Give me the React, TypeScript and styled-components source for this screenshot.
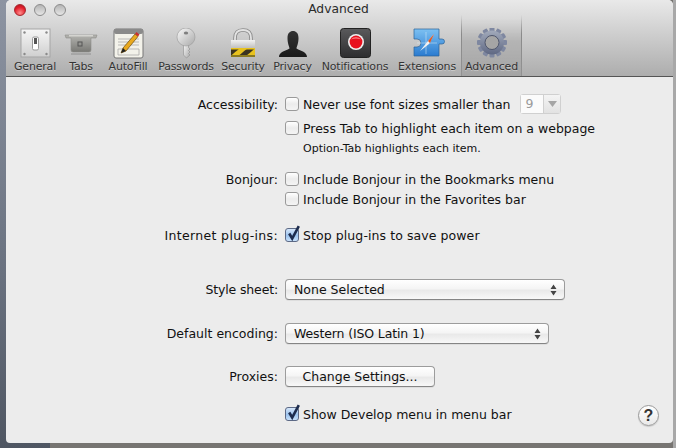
import React from "react";
import styled, { createGlobalStyle } from "styled-components";

const Global = createGlobalStyle`
  html, body { margin: 0; padding: 0; width: 676px; height: 448px; overflow: hidden; background: #74726f; }
  #root { width: 676px; height: 448px; }
`;

const Desktop = styled.div`
  width: 676px; height: 448px; box-sizing: border-box; padding: 0 3px 5px 6px;
  background:
    linear-gradient(90deg, transparent 673px, #a8a8a8 673px),
    linear-gradient(#8d94a2 0, #6a7280 60%, #4f5662 100%) left / 50px 100% no-repeat,
    #777572;
  font-family: "DejaVu Sans", sans-serif; color: #111;
`;
const Win = styled.div`
  width: 667px; height: 443px; display: flex; flex-direction: column; overflow: hidden;
  border-radius: 5px 5px 4px 4px; background: #ececec;
`;
const Toolbar = styled.div`
  height: 76px; flex: none; position: relative; display: flex; align-items: flex-end; padding-left: 6px;
  background: linear-gradient(#e9e9e9, #adadad); border-bottom: 1px solid #555;
`;
const Lights = styled.div`position: absolute; left: 8px; top: 4px; display: flex; gap: 8px;`;
const Light = styled.span<{ $c?: boolean }>`
  width: 12px; height: 12px; border-radius: 50%; box-sizing: border-box; border: 1px solid ${p => p.$c ? "#a5262c" : "#8b8b8b"};
  background: ${p => p.$c ? "radial-gradient(circle at 50% 80%, #ff8d8d, #e3202c 60%, #a81521)" : "linear-gradient(#b5b5b5, #e6e6e6)"};
`;
const Title = styled.div`
  position: absolute; left: 0; right: 0; top: 1px; text-align: center; font-size: 12.3px; line-height: 17px; color: #2b2b2b; padding-right: 2px;
`;
const Item = styled.div<{ $w: number; $ml?: number; $sel?: boolean }>`
  width: ${p => p.$w}px; margin-left: ${p => p.$ml ?? 0}px; height: 48px; flex: none; display: flex; flex-direction: column; align-items: center;
  ${p => p.$sel ? `
    height: 76px; justify-content: flex-end; box-sizing: border-box;
    background: linear-gradient(rgba(0,0,0,0) 25%, rgba(0,0,0,.1) 55%, rgba(0,0,0,.05) 100%);
    border-left: 1px solid; border-right: 1px solid;
    border-image: linear-gradient(rgba(120,120,120,0) 20%, #8a8a8a 45%, #929292) 1;
  ` : ""}
`;
const IconBox = styled.div`height: 32px; width: 36px; flex: none;`;
const ItemLabel = styled.div`
  font-size: 11px; line-height: 14px; height: 16px; color: #333; white-space: nowrap; letter-spacing: -0.18px; text-shadow: 0 1px 0 rgba(255,255,255,.35);
`;
const Content = styled.div`flex: 1; position: relative; padding-top: 17px;`;
const Row = styled.div<{ $mt?: number; $h?: number }>`
  display: grid; grid-template-columns: 272px 1fr; column-gap: 7px; align-items: center;
  height: ${p => p.$h ?? 20}px; margin-top: ${p => p.$mt ?? 0}px;
`;
const Label = styled.div<{ $ls?: number }>`
  text-align: right; font-size: 12.5px; white-space: nowrap; letter-spacing: ${p => p.$ls ?? 0}px;
`;
const Ctl = styled.div<{ $ls?: number }>`
  display: flex; align-items: center; font-size: 12.5px; white-space: nowrap; letter-spacing: ${p => p.$ls ?? 0}px;
`;
const Box = styled.span<{ $on?: boolean }>`
  width: 14px; height: 14px; box-sizing: border-box; border-radius: 3px; flex: none; margin-right: 4px; position: relative;
  border: 1px solid ${p => p.$on ? "#5d6a86" : "#9a9a9a"};
  background: ${p => p.$on ? "linear-gradient(#d5e6fa, #9cc3ee 55%, #c7e0fa)" : "linear-gradient(#fff, #ececec 50%, #f4f4f4)"};
`;
const CheckSvg = styled.svg`position: absolute; left: 0; top: -5px;`;
const Hint = styled.div`grid-column: 2; font-size: 11px; padding-left: 18px; white-space: nowrap;`;
const Mini = styled.div`
  margin-left: 10px; width: 41px; height: 20px; box-sizing: border-box; display: flex; border: 1px solid #d0d0d0; border-radius: 3px; background: #f7f7f7; color: #9a9a9a; font-size: 12.5px; align-items: center;
`;
const MiniVal = styled.div`width: 23px; padding-left: 4px; box-sizing: border-box; height: 100%; line-height: 18px; background: #fbfbfb; border-right: 1px solid #d0d0d0;`;
const MiniArrow = styled.div`flex: 1; display: flex; align-items: center; justify-content: center; height: 100%; background: linear-gradient(#f4f4f4, #e2e2e2);`;
const Select = styled.div<{ $w: number }>`
  width: ${p => p.$w}px; height: 21px; box-sizing: border-box; border: 1px solid #9c9c9c; border-bottom-color: #858585; border-radius: 4px;
  background: linear-gradient(#ffffff, #f5f5f5 45%, #e9e9e9 55%, #f8f8f8); display: flex; align-items: center; justify-content: space-between;
  padding: 0 7px 0 8px; font-size: 12.5px; box-shadow: 0 1px 0 rgba(0,0,0,.06);
`;
const SelectText = styled.span<{ $ls?: number }>`letter-spacing: ${p => p.$ls ?? 0}px;`;
const Button = styled.div`
  width: 150px; height: 21px; box-sizing: border-box; border: 1px solid #9c9c9c; border-bottom-color: #858585; border-radius: 4px; text-align: center;
  background: linear-gradient(#ffffff, #f5f5f5 45%, #e9e9e9 55%, #f8f8f8); font-size: 12.5px; line-height: 19px; box-shadow: 0 1px 0 rgba(0,0,0,.06);
`;
const Help = styled.div`
  position: absolute; left: 632px; top: 328px; width: 21px; height: 21px; box-sizing: border-box; border-radius: 50%; border: 1px solid #9a9a9a;
  background: linear-gradient(#fff, #e9e9e9); font-family: "Liberation Sans", sans-serif; font-weight: 700; font-size: 16px; line-height: 19px; text-align: center; color: #333; box-shadow: 0 1px 1px rgba(0,0,0,.15);
`;

const Check = () => (
  <CheckSvg width="16" height="18" viewBox="0 0 16 18">
    <path d="M3.2 9.5 L6.2 14.5 L12.8 2.2" fill="none" stroke="#1d2c4e" strokeWidth="2.6" />
  </CheckSvg>
);
const Updown = () => (
  <svg width="7" height="12" viewBox="0 0 7 12"><path d="M3.5 0.5 L6.5 5 H0.5Z M3.5 11.5 L0.5 7 H6.5Z" fill="#444" /></svg>
);

const General = () => (
  <svg width="36" height="32" viewBox="0 0 36 32">
    <defs><linearGradient id="g1" x1="0" y1="0" x2="0" y2="1"><stop offset="0" stopColor="#f6f6f6" /><stop offset="1" stopColor="#cfcfcf" /></linearGradient></defs>
    <rect x="4" y="1" width="29" height="28" fill="url(#g1)" stroke="#a5a5a5" />
    <g fill="#8a8a8a"><circle cx="7.5" cy="4.5" r="1.2" /><circle cx="29.5" cy="4.5" r="1.2" /><circle cx="7.5" cy="26" r="1.2" /><circle cx="29.5" cy="26" r="1.2" /></g>
    <rect x="15.5" y="9" width="6" height="13" rx="1.5" fill="#fff" stroke="#999" />
    <rect x="17" y="10" width="3" height="6" fill="#555" />
  </svg>
);
const Tabs = () => (
  <svg width="36" height="32" viewBox="0 0 36 32">
    <defs><linearGradient id="t1" x1="0" y1="0" x2="0" y2="1"><stop offset="0" stopColor="#b4b4b0" /><stop offset="1" stopColor="#787874" /></linearGradient></defs>
    <path d="M2 7 H34 L33 10 H28 V22 Q28 24 26 24 H10 Q8 24 8 22 V10 H3Z" fill="url(#t1)" stroke="#8e8e8a" strokeWidth=".6" />
    <rect x="6" y="7" width="24" height="1.5" fill="#d4d4d0" />
    <rect x="15" y="14" width="4" height="4" fill="none" stroke="#555" />
    <rect x="8" y="25" width="20" height="2" fill="#000" opacity=".12" />
  </svg>
);
const AutoFill = () => (
  <svg width="36" height="32" viewBox="0 0 36 32">
    <rect x="4" y="1" width="29" height="29" rx="2" fill="#f3f2ea" stroke="#777" />
    <rect x="4" y="1" width="29" height="5" rx="2" fill="#8a8a8a" />
    <g stroke="#aaa" strokeWidth=".8"><path d="M8 11H29M8 14H29M8 17H29" /><path d="M8 21H29V27H8Z" fill="none" /></g>
    <path d="M11 25 L13 20 L25 6 L28 8.5 L16 23Z" fill="#e9a91e" stroke="#6b4a10" strokeWidth=".7" />
    <path d="M25 6 L26.5 4 L29.5 6.5 L28 8.5Z" fill="#c8312e" />
    <path d="M11 25 L13 20 L16 23Z" fill="#222" />
  </svg>
);
const Key = () => (
  <svg width="36" height="32" viewBox="0 0 36 32">
    <defs><linearGradient id="k1" x1="0" y1="0" x2="1" y2="1"><stop offset="0" stopColor="#fafafa" /><stop offset="1" stopColor="#a9a9a9" /></linearGradient></defs>
    <path d="M15.5 15 V27 L18.5 30 L22 27 L20.5 25.5 L22 24 L20.5 22.5 L22 21 L20.5 19.5 V15Z" fill="url(#k1)" stroke="#8d8d8d" strokeWidth=".6" />
    <circle cx="18" cy="9" r="9" fill="url(#k1)" stroke="#9b9b9b" strokeWidth=".6" />
    <ellipse cx="18" cy="5" rx="2.2" ry="1.6" fill="#7f7f7f" />
  </svg>
);
const Lock = () => (
  <svg width="36" height="32" viewBox="0 0 36 32">
    <defs>
      <linearGradient id="l1" x1="0" y1="0" x2="0" y2="1"><stop offset="0" stopColor="#f2f2f2" /><stop offset="1" stopColor="#b9b9b9" /></linearGradient>
      <pattern id="l2" width="10" height="10" patternUnits="userSpaceOnUse" patternTransform="rotate(50)"><rect width="10" height="10" fill="#e8c21e" /><rect width="5" height="10" fill="#3a3420" /></pattern>
    </defs>
    <path d="M10 14 V10 Q10 2 18 2 Q26 2 26 10 V14" fill="none" stroke="#8b8b8b" strokeWidth="3.6" />
    <path d="M10 14 V10 Q10 2 18 2 Q26 2 26 10 V14" fill="none" stroke="#e3e3e3" strokeWidth="1.8" />
    <rect x="6" y="12" width="24" height="9" fill="url(#l1)" />
    <rect x="6" y="20" width="24" height="7" fill="#e8c21e" />
    <rect x="6" y="21.5" width="24" height="5.5" fill="url(#l2)" />
    <rect x="6" y="27" width="24" height="2" fill="#8a7a20" />
  </svg>
);
const Privacy = () => (
  <svg width="36" height="32" viewBox="0 0 36 32">
    <defs><linearGradient id="p1" x1="0" y1="0" x2="0" y2="1"><stop offset="0" stopColor="#333" /><stop offset="1" stopColor="#1a1a1a" /></linearGradient></defs>
    <path d="M4 29 C4 24 10 23 14.5 20.5 C14.5 19 12.5 16 12.5 10 C12.5 5 15 3 18 3 C21 3 23.5 5 23.5 10 C23.5 16 21.5 19 21.5 20.5 C26 23 32 24 32 29Z" fill="url(#p1)" />
  </svg>
);
const Notif = () => (
  <svg width="36" height="32" viewBox="0 0 36 32">
    <defs><linearGradient id="n1" x1="0" y1="0" x2="0" y2="1"><stop offset="0" stopColor="#5a5a5c" /><stop offset="1" stopColor="#2d2d2f" /></linearGradient></defs>
    <rect x="3.5" y="0.5" width="30" height="29" rx="3" fill="url(#n1)" stroke="#222" />
    <circle cx="19" cy="14" r="8" fill="#f0f0f0" />
    <circle cx="19" cy="14" r="6.4" fill="#e8101e" />
    <path d="M14 11.5 A6 5 0 0 1 24 11.5 Q19 9.5 14 11.5Z" fill="#ff8a8a" />
  </svg>
);
const Ext = () => (
  <svg width="36" height="32" viewBox="0 0 36 32">
    <defs><linearGradient id="e1" x1="0" y1="0" x2="0" y2="1"><stop offset="0" stopColor="#7cc0f2" /><stop offset="1" stopColor="#2a7bd0" /></linearGradient></defs>
    <path d="M5 1 H30 V11 H33 A2.5 2.5 0 1 1 33 16 H30 V28 H5 V19 H8 A3.5 3.5 0 1 0 8 11 H5Z" fill="url(#e1)" stroke="#2d6197" strokeWidth=".7" />
    <g stroke="#d8ecfb" strokeWidth=".5"><path d="M17 4 V26 M8 15 H28" /></g>
    <path d="M11 23 L19 13 L25 6 L20 16Z" fill="#f2f2f2" />
    <path d="M25 6 L19 13 L21 15Z" fill="#e2571e" />
  </svg>
);
const Gear = () => {
  const teeth = Array.from({ length: 12 }, (_, i) => i * 30);
  return (
    <svg width="36" height="32" viewBox="0 0 36 32">
      <defs><linearGradient id="a1" x1="0" y1="0" x2="0" y2="1"><stop offset="0" stopColor="#a2aabb" /><stop offset="1" stopColor="#5f6883" /></linearGradient></defs>
      {teeth.map(a => <rect key={a} x="15.5" y="-0.5" width="5" height="7" rx="1" fill="#7e87a0" transform={`rotate(${a} 18 14.5)`} />)}
      <circle cx="18" cy="14.5" r="12" fill="url(#a1)" />
      <circle cx="18" cy="14.5" r="7" fill="#a5a5a5" stroke="#4f566c" strokeWidth="1" />
    </svg>
  );
};

const tools = [
  { l: "General", w: 46, I: General },
  { l: "Tabs", w: 46, I: Tabs },
  { l: "AutoFill", w: 48, I: AutoFill },
  { l: "Passwords", w: 68, I: Key },
  { l: "Security", w: 46, I: Lock },
  { l: "Privacy", w: 53, I: Privacy },
  { l: "Notifications", w: 68, ml: 2, I: Notif },
  { l: "Extensions", w: 68, ml: 4, I: Ext },
];

export default function App() {
  return (
    <>
      <Global />
      <Desktop>
        <Win>
          <Toolbar>
            <Lights><Light $c /><Light /><Light /></Lights>
            <Title>Advanced</Title>
            {tools.map(t => (
              <Item key={t.l} $w={t.w} $ml={t.ml}>
                <IconBox><t.I /></IconBox>
                <ItemLabel>{t.l}</ItemLabel>
              </Item>
            ))}
            <Item $w={61} $sel>
              <IconBox><Gear /></IconBox>
              <ItemLabel>Advanced</ItemLabel>
            </Item>
          </Toolbar>
          <Content>
            <Row>
              <Label>Accessibility:</Label>
              <Ctl $ls={-0.06}>
                <Box />Never use font sizes smaller than
                <Mini><MiniVal>9</MiniVal><MiniArrow><svg width="9" height="6" viewBox="0 0 9 6"><path d="M0 0H9L4.5 6Z" fill="#a5a5a5" /></svg></MiniArrow></Mini>
              </Ctl>
            </Row>
            <Row $mt={4}><span /><Ctl><Box />Press Tab to highlight each item on a webpage</Ctl></Row>
            <Row $mt={2} $h={16}><Hint>Option-Tab highlights each item.</Hint></Row>
            <Row $mt={13}><Label>Bonjour:</Label><Ctl><Box />Include Bonjour in the Bookmarks menu</Ctl></Row>
            <Row><span /><Ctl><Box />Include Bonjour in the Favorites bar</Ctl></Row>
            <Row $mt={16}><Label $ls={0.33}>Internet plug-ins:</Label><Ctl $ls={0.08}><Box $on><Check /></Box>Stop plug-ins to save power</Ctl></Row>
            <Row $mt={34}><Label $ls={-0.15}>Style sheet:</Label><Select $w={280}>None Selected<Updown /></Select></Row>
            <Row $mt={24}><Label>Default encoding:</Label><Select $w={264}><SelectText $ls={-0.13}>Western (ISO Latin 1)</SelectText><Updown /></Select></Row>
            <Row $mt={23}><Label>Proxies:</Label><Button>Change Settings...</Button></Row>
            <Row $mt={18}><span /><Ctl><Box $on><Check /></Box>Show Develop menu in menu bar</Ctl></Row>
            <Help>?</Help>
          </Content>
        </Win>
      </Desktop>
    </>
  );
}
